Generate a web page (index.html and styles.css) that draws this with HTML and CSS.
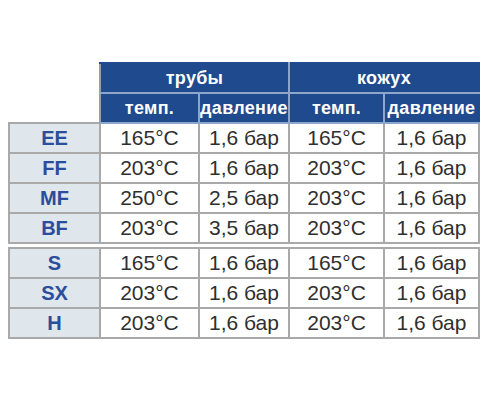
FILE: index.html
```html
<!DOCTYPE html>
<html lang="ru">
<head>
<meta charset="utf-8">
<link rel="stylesheet" href="styles.css">
</head>
<body>
<table class="spec">
  <colgroup>
    <col class="c-label"><col class="c1"><col class="c2"><col class="c3"><col class="c4">
  </colgroup>
  <thead>
    <tr class="h1">
      <td class="blank"></td>
      <th colspan="2">трубы</th>
      <th colspan="2">кожух</th>
    </tr>
    <tr class="h2">
      <td class="blank"></td>
      <th>темп.</th>
      <th>давление</th>
      <th>темп.</th>
      <th>давление</th>
    </tr>
  </thead>
  <tbody>
    <tr><td class="lbl">EE</td><td>165°C</td><td>1,6 бар</td><td>165°C</td><td>1,6 бар</td></tr>
    <tr><td class="lbl">FF</td><td>203°C</td><td>1,6 бар</td><td>203°C</td><td>1,6 бар</td></tr>
    <tr><td class="lbl">MF</td><td>250°C</td><td>2,5 бар</td><td>203°C</td><td>1,6 бар</td></tr>
    <tr><td class="lbl">BF</td><td>203°C</td><td>3,5 бар</td><td>203°C</td><td>1,6 бар</td></tr>
    <tr class="gap"><td></td><td></td><td></td><td></td><td></td></tr>
    <tr><td class="lbl">S</td><td>165°C</td><td>1,6 бар</td><td>165°C</td><td>1,6 бар</td></tr>
    <tr><td class="lbl">SX</td><td>203°C</td><td>1,6 бар</td><td>203°C</td><td>1,6 бар</td></tr>
    <tr><td class="lbl">H</td><td>203°C</td><td>1,6 бар</td><td>203°C</td><td>1,6 бар</td></tr>
  </tbody>
</table>
</body>
</html>
```
FILE: styles.css
```css
html, body {
  margin: 0;
  padding: 0;
  background: #ffffff;
}
body {
  padding: 62px 0 0 8px;
  font-family: "Liberation Sans", Arial, sans-serif;
}
.spec {
  border-collapse: collapse;
  table-layout: fixed;
  width: 470px;
}
.c-label { width: 91px; }
.c1 { width: 99px; }
.c2 { width: 90px; }
.c3 { width: 95px; }
.c4 { width: 95px; }

.spec th {
  background: #1f4a8d;
  color: #ffffff;
  font-weight: bold;
  font-size: 18px;
  letter-spacing: 0.3px;
  height: 28px;
  line-height: 20px;
  padding: 0;
  border: 2px solid #8ea6c9;
  text-align: center;
  white-space: nowrap;
  overflow: hidden;
}
.h1 th {
  border-top-color: #1f4a8d;
}
.h1 th:last-child, .h2 th:last-child {
  border-right-color: #1f4a8d;
}
.h2 th:nth-child(2) {
  border-left-color: #9aa0a8;
}
.h1 th:nth-child(2) {
  border-left-color: #9aa0a8;
}
.spec td.blank {
  border: none;
  background: #ffffff;
}
.spec td {
  height: 28px;
  line-height: 22px;
  padding: 0;
  border: 2px solid #a9a9a9;
  text-align: center;
  color: #2f2f2f;
  font-size: 21px;
  white-space: nowrap;
}
.spec td.lbl {
  background: #dfe6ec;
  color: #2a4d9c;
  font-weight: bold;
  font-size: 20px;
}
.spec tr.gap td {
  height: 3px;
  line-height: 3px;
  font-size: 1px;
  border-top: 2px solid #a9a9a9;
  border-left: none;
  border-right: none;
  border-bottom: 2px solid #a9a9a9;
  background: #ffffff;
}
```
